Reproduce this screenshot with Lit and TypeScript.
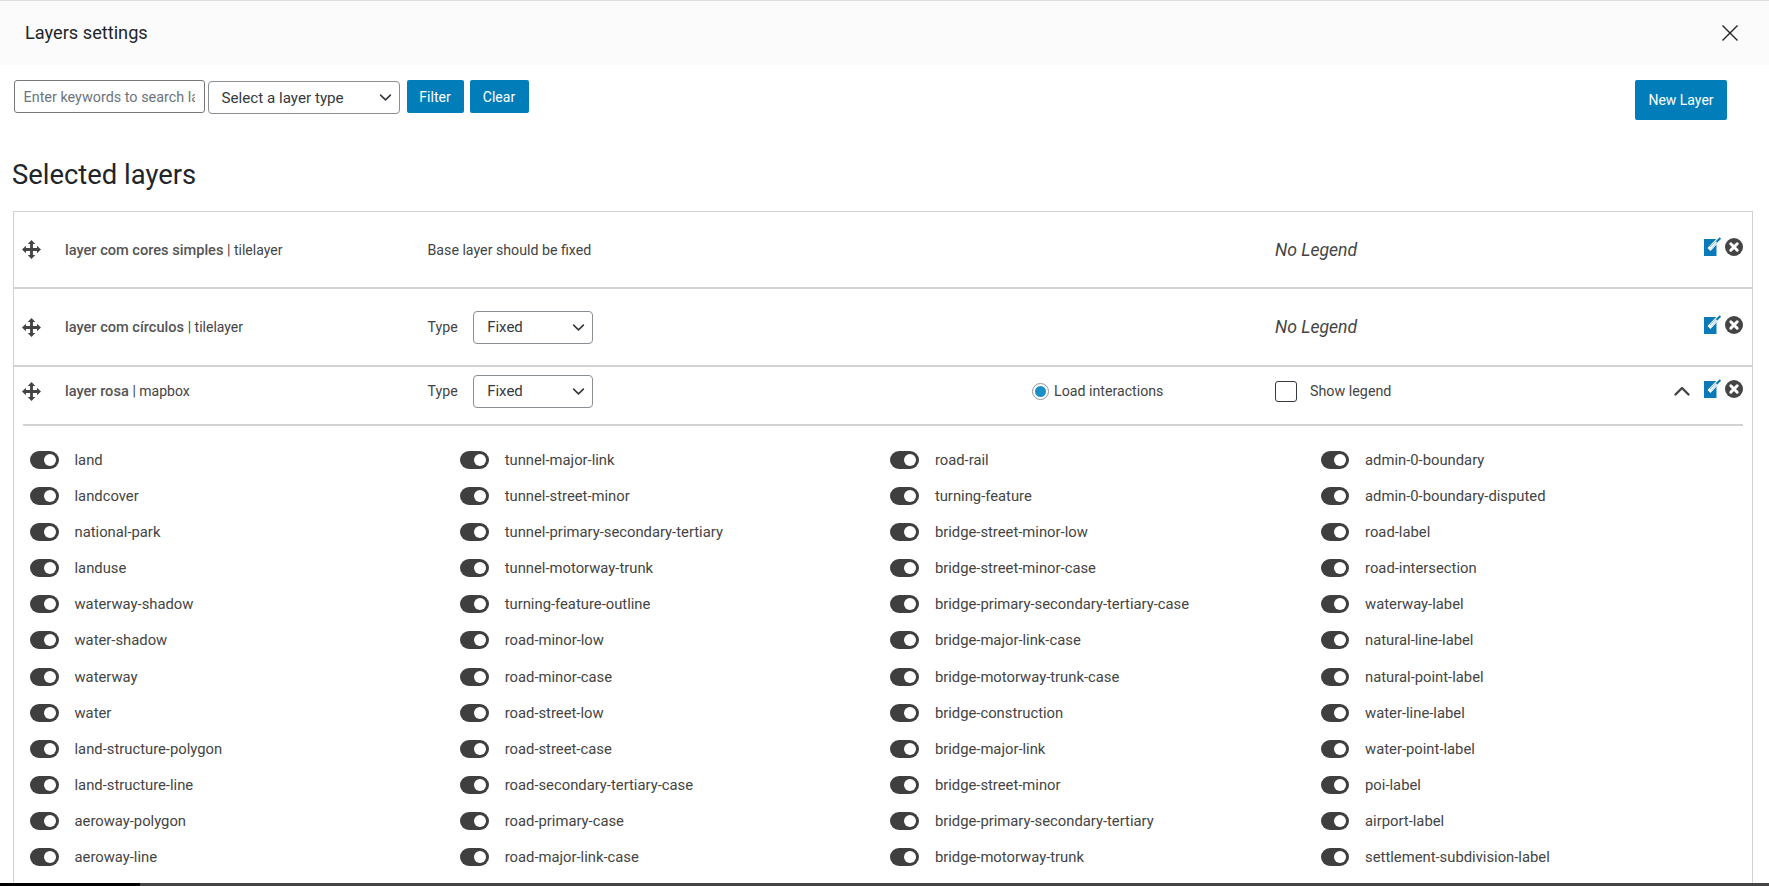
import { LitElement, html, css, svg } from "lit";
import { customElement } from "lit/decorators.js";

const LAYERS = [
  ["land","landcover","national-park","landuse","waterway-shadow","water-shadow","waterway","water","land-structure-polygon","land-structure-line","aeroway-polygon","aeroway-line"],
  ["tunnel-major-link","tunnel-street-minor","tunnel-primary-secondary-tertiary","tunnel-motorway-trunk","turning-feature-outline","road-minor-low","road-minor-case","road-street-low","road-street-case","road-secondary-tertiary-case","road-primary-case","road-major-link-case"],
  ["road-rail","turning-feature","bridge-street-minor-low","bridge-street-minor-case","bridge-primary-secondary-tertiary-case","bridge-major-link-case","bridge-motorway-trunk-case","bridge-construction","bridge-major-link","bridge-street-minor","bridge-primary-secondary-tertiary","bridge-motorway-trunk"],
  ["admin-0-boundary","admin-0-boundary-disputed","road-label","road-intersection","waterway-label","natural-line-label","natural-point-label","water-line-label","water-point-label","poi-label","airport-label","settlement-subdivision-label"],
].flat();

const chevron = svg`<svg class="chev" viewBox="0 0 16 10" width="16" height="10"><path d="M1.5 8.5L8 2l6.5 6.5" fill="none" stroke="#444" stroke-width="2.4" stroke-linecap="round" stroke-linejoin="round"/></svg>`;

const move = svg`<svg class="move" viewBox="0 0 20 20" width="19" height="19"><path fill="#444" d="M10 0l4 4.2h-2.5v4.3h4.3V6l4.2 4-4.2 4v-2.5h-4.3v4.3H14L10 20l-4-4.2h2.5v-4.3H4.2V14L0 10l4.2-4v2.5h4.3V4.2H6z"/></svg>`;

const edit = svg`<svg class="edit" viewBox="0 0 18 19" width="18" height="19"><path d="M0 2h12.5v17H0z" fill="#0a7ab8"/><path d="M5 12.5L16.5 0.5" stroke="#fff" stroke-width="4"/><path d="M6.5 10.8L16.4 1" stroke="#0a7ab8" stroke-width="2.1"/><path d="M6 11.4L12.5 4.8" stroke="#fff" stroke-width="1.6"/></svg>`;

const remove = svg`<svg class="rm" viewBox="0 0 18 18" width="18" height="18"><circle cx="9" cy="9" r="9" fill="#444"/><path d="M5.8 5.8l6.4 6.4M12.2 5.8l-6.4 6.4" stroke="#fff" stroke-width="3" stroke-linecap="round"/></svg>`;

const selectArrow = svg`<svg viewBox="0 0 16 16" width="13" height="13"><path d="M2 5l6 6 6-6" fill="none" stroke="#343a40" stroke-width="2" stroke-linecap="round" stroke-linejoin="round"/></svg>`;

@customElement("app-root")
export class AppRoot extends LitElement {
  static styles = css`
    :host { display: block; position: relative; width: 1769px; height: 886px; overflow: hidden; background: #fff; font-family: Roboto, "Liberation Sans", sans-serif; font-size: 14.2px; color: #444; }
    * { box-sizing: border-box; }
    .header { height: 65px; border-top: 1px solid #dedede; background: #fbfbfb; display: flex; align-items: center; justify-content: space-between; padding: 0 31px 0 25px; }
    .title { font-size: 18.2px; color: #212529; line-height: 1; }
    .close { display: block; }
    .toolbar { height: 75px; display: flex; align-items: flex-start; padding: 15px 42px 0 13.5px; }
    .input { width: 191px; height: 33px; border: 1px solid #777; border-radius: 3px; font: inherit; font-size: 14.4px; color: #495057; padding: 1px 9px 0; outline: none; }
    .input::placeholder { color: #6c757d; opacity: 1; }
    .select { display: flex; align-items: center; justify-content: space-between; border: 1px solid #8a8f94; border-radius: 4px; background: #fff; color: #343a40; }
    .select.type { width: 192px; height: 33px; margin: 1px 0 0 3px; padding: 0 7px 0 13px; font-size: 15.2px; }
    .btn { background: #017dba; color: #fff; border-radius: 2px; display: flex; align-items: center; justify-content: center; font-size: 14px; }
    .btn.filter { width: 57px; height: 33px; margin-left: 7px; }
    .btn.clear { width: 59px; height: 33px; margin-left: 6px; }
    .btn.new { width: 92px; height: 40px; margin-left: auto; }
    h2 { margin: 0; font-size: 27.4px; font-weight: 400; color: #212529; line-height: 30px; padding: 20px 0 0 12px; height: 71px; }
    .list { margin-left: 13px; width: 1740px; border: 1px solid #d2d2d2; border-bottom: 0; }
    .row { display: grid; grid-template-columns: 43px 362.5px 604.5px 243px 1fr auto; align-items: center; padding: 0 9px 0 8px; }
    .row.first { height: 77px; border-bottom: 2px solid #d2d2d2; }
    .row.second { height: 78px; border-bottom: 2px solid #d2d2d2; }
    .row.short { height: 57px; padding-bottom: 9px; }
    .move { display: block; }
    .name { font-size: 14.6px; font-weight: 500; color: #555; }
    .name span { font-size: 14px; font-weight: 400; color: #444; }
    .type-cell { display: flex; align-items: center; gap: 15.5px; }
    .select.small { width: 120px; height: 33px; padding: 0 7px 0 13px; font-size: 15px; }
    .legend { font-size: 17.6px; font-style: italic; color: #444; }
    .radio { display: flex; align-items: center; gap: 5px; font-size: 14.2px; }
    .radio i { width: 17px; height: 17px; border-radius: 50%; border: 1px solid #8a98a5; display: flex; align-items: center; justify-content: center; }
    .radio i::after { content: ""; width: 11px; height: 11px; background: #1a8fc8; border-radius: 50%; }
    .check { display: flex; align-items: center; gap: 13px; font-size: 14.3px; }
    .check i { width: 22px; height: 21px; border: 1px solid #343a40; border-radius: 3px; }
    .actions { display: flex; align-items: center; gap: 3px; margin-top: -5.5px; }
    .chev { margin-right: 11px; margin-top: 6px; }
    .rm { margin-top: 1px; }
    .divider { height: 2px; background: #d2d2d2; margin: 0 9px 0 8.5px; }
    .grid { display: grid; grid-auto-flow: column; grid-template-rows: repeat(12, 36.09px); grid-template-columns: repeat(4, 430.2px); padding: 16px 0 30px 16px; }
    .item { display: flex; align-items: center; gap: 16px; font-size: 14.8px; }
    .switch { width: 28.5px; height: 18px; border-radius: 9px; background: #3f3f3f; position: relative; }
    .switch::after { content: ""; position: absolute; right: 3px; top: 3px; width: 12px; height: 12px; background: #fff; border-radius: 50%; }
    .scroll { position: absolute; left: 0; right: 0; bottom: 0; height: 3px; background: #444; }
    .scroll::before { content: ""; position: absolute; left: 0; top: 0; height: 3px; width: 140px; background: #000; }
  `;

  private actions(open = false) {
    return html`<div class="actions">${open ? chevron : ""}${edit}${remove}</div>`;
  }

  render() {
    return html`
      <div class="header">
        <div class="title">Layers settings</div>
        <svg class="close" viewBox="0 0 16 16" width="16" height="16"><path d="M.5.5l15 15M15.5.5l-15 15" stroke="#222" stroke-width="1.4" fill="none"/></svg>
      </div>
      <div class="toolbar">
        <input class="input" placeholder="Enter keywords to search layers" />
        <div class="select type">Select a layer type ${selectArrow}</div>
        <div class="btn filter">Filter</div>
        <div class="btn clear">Clear</div>
        <div class="btn new">New Layer</div>
      </div>
      <h2>Selected layers</h2>
      <div class="list">
        <div class="row first">
          ${move}
          <div class="name">layer com cores simples <span>| tilelayer</span></div>
          <div>Base layer should be fixed</div>
          <div></div>
          <div class="legend">No Legend</div>
          ${this.actions()}
        </div>
        <div class="row second">
          ${move}
          <div class="name">layer com círculos <span>| tilelayer</span></div>
          <div class="type-cell">Type <div class="select small">Fixed ${selectArrow}</div></div>
          <div></div>
          <div class="legend">No Legend</div>
          ${this.actions()}
        </div>
        <div class="row short">
          ${move}
          <div class="name">layer rosa <span>| mapbox</span></div>
          <div class="type-cell">Type <div class="select small">Fixed ${selectArrow}</div></div>
          <div class="radio"><i></i>Load interactions</div>
          <div class="check"><i></i>Show legend</div>
          ${this.actions(true)}
        </div>
        <div class="divider"></div>
        <div class="grid">
          ${LAYERS.map((l) => html`<div class="item"><div class="switch"></div><div>${l}</div></div>`)}
        </div>
      </div>
      <div class="scroll"></div>
    `;
  }
}
